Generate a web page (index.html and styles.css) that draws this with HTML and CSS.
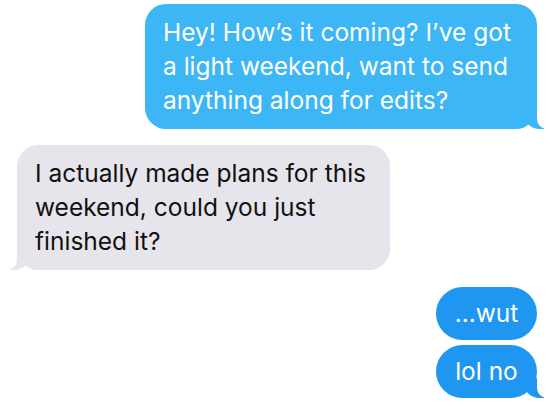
FILE: index.html
```html
<!DOCTYPE html>
<html lang="en">
<head>
    <meta charset="UTF-8">
    <meta name="viewport" content="width=device-width, initial-scale=1.0">
    <title>Messages</title>
    <link rel="stylesheet" href="styles.css">
</head>
<body>
    <main class="thread">
        <div class="bubble sent light tail">Hey! How’s it coming? I’ve got a light weekend, want to send anything along for edits?</div>
        <div class="bubble received tail">I actually made plans for this weekend, could you just finished it?</div>
        <div class="group">
            <div class="bubble sent short">...wut</div>
            <div class="bubble sent short tail">lol no</div>
        </div>
    </main>
</body>
</html>
```

FILE: styles.css
```css
body {
    margin: 0;
    padding: 0;
    background-color: #fff;
    font-family: Inter, "Liberation Sans", Arial, sans-serif;
}
.thread {
    display: flex;
    flex-direction: column;
    gap: 16px;
    padding: 4px 16px 0 17px;
}
.group {
    display: flex;
    flex-direction: column;
    align-items: flex-end;
    gap: 5px;
    margin-top: 1px;
}
.bubble {
    position: relative;
    font-size: 24.5px;
    line-height: 34px;
    padding: 11px 18px 12px 18px;
    border-radius: 21px;
    box-sizing: border-box;
}
.sent {
    align-self: flex-end;
    background-color: #1f97f0;
    color: #fff;
}
.sent.light {
    background-color: #3db6f5;
    width: 392px;
}
.received {
    align-self: flex-start;
    background-color: #e6e5eb;
    color: #111;
    width: 373px;
    padding-left: 18px;
}
.short {
    width: 101px;
    height: 53px;
    border-radius: 27px;
    padding: 9px 0 0 0;
    text-align: center;
}

/* tails */
.sent.tail::before,
.received.tail::before {
    content: "";
    position: absolute;
    bottom: 0;
    width: 20px;
    height: 20px;
    background-color: inherit;
}
.sent.tail::after,
.received.tail::after {
    content: "";
    position: absolute;
    bottom: 0;
    width: 12px;
    height: 22px;
    background-color: #fff;
}
.sent.tail::before {
    right: -7px;
    border-bottom-left-radius: 16px 14px;
}
.sent.tail::after {
    right: -12px;
    border-bottom-left-radius: 10px;
}
.received.tail::before {
    left: -7px;
    border-bottom-right-radius: 16px 14px;
}
.received.tail::after {
    left: -12px;
    border-bottom-right-radius: 10px;
}
```
